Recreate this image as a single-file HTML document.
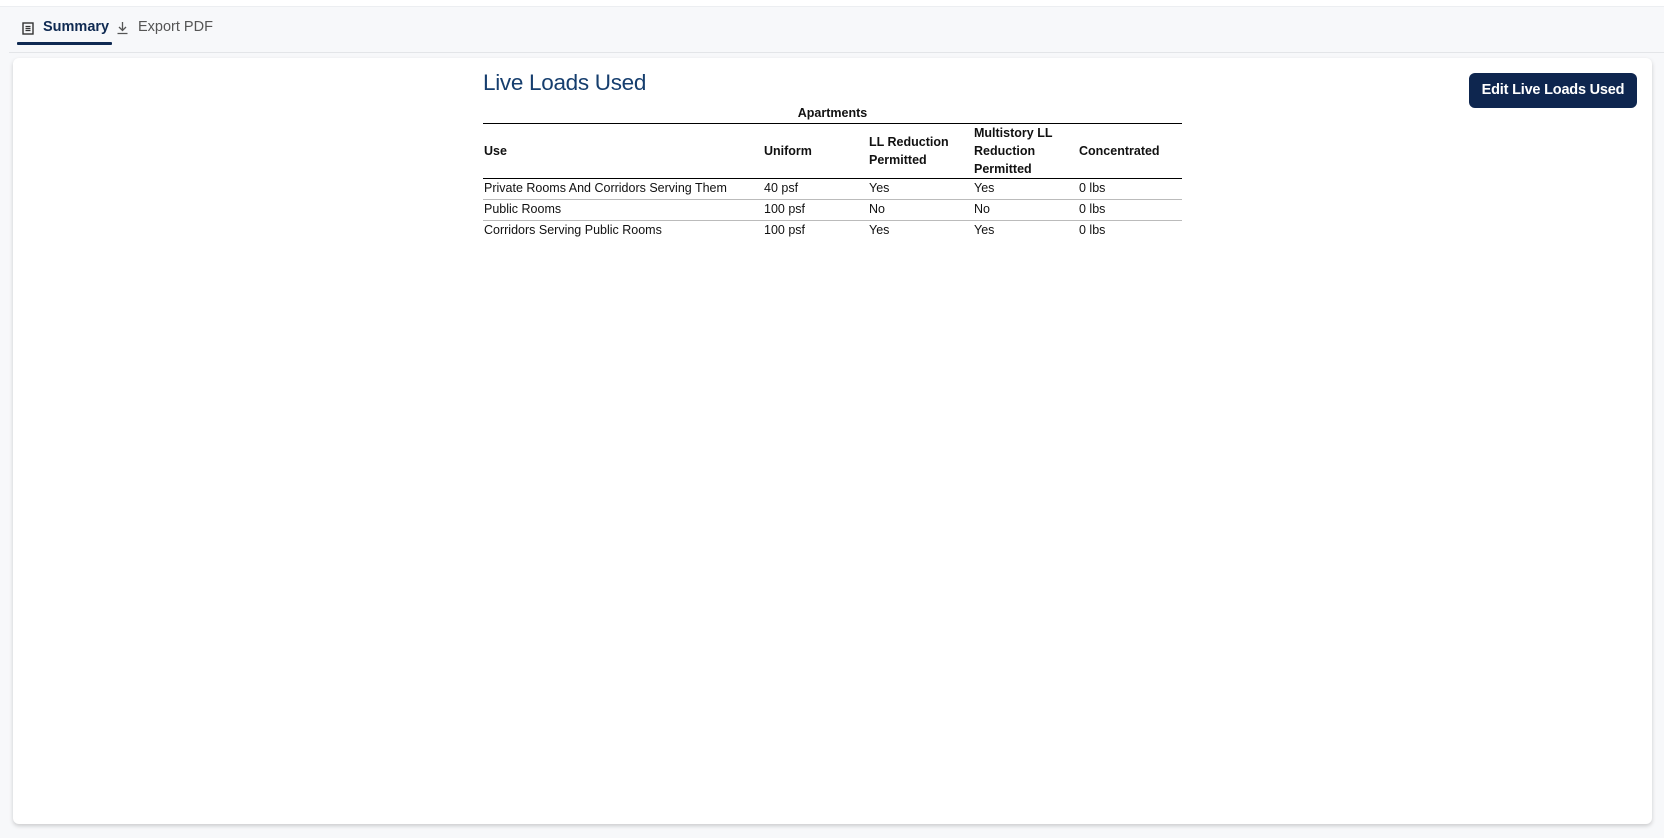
<!DOCTYPE html>
<html><head><style>
*{margin:0;padding:0;box-sizing:border-box}
body{width:1664px;height:838px;background:#f7f8fa;font-family:"Liberation Sans",sans-serif;position:relative;overflow:hidden}
.top{position:absolute;left:0;top:0;width:1664px;height:7px;background:#fff;border-bottom:1px solid #eceef1}
.hdr{position:absolute;left:9px;top:52px;width:1655px;height:1px;background:#e3e5e8}
.tab{position:absolute;top:19px;font-size:14.5px}
.ul{position:absolute;left:17px;top:42px;width:95px;height:3px;background:#0f2a52;border-radius:1px}
.card{position:absolute;left:13px;top:58px;width:1639px;height:766px;background:#fff;border-radius:6px;box-shadow:0 2px 4px rgba(0,0,0,.18)}
h1{position:absolute;left:483px;top:70px;font-size:22.5px;font-weight:normal;color:#163e6e;letter-spacing:-0.3px}
.btn{position:absolute;left:1469px;top:73px;width:168px;height:35px;background:#0e264f;color:#fff;border-radius:6px;font-size:14.5px;font-weight:bold;text-align:center;line-height:35px;letter-spacing:-0.2px}
table{position:absolute;left:483px;top:104px;width:699px;border-collapse:collapse;font-size:12.5px;color:#111}
th{font-weight:bold;text-align:left;vertical-align:middle;line-height:18px}
td{height:21px;vertical-align:middle;line-height:19px;padding-left:1px}
.cap th{text-align:center;height:19px;border-bottom:1px solid #000}
.h th{height:54px;border-bottom:1px solid #000;padding-left:1px}
.r td{border-bottom:1px solid #bbb}
</style></head><body>
<div class="top"></div>
<svg style="position:absolute;left:22px;top:22px" width="12" height="13" viewBox="0 0 12 13"><rect x="1" y="1" width="10" height="11" fill="none" stroke="#333" stroke-width="1.4"/><path d="M3.5 4.5h5M3.5 6.5h5M3.5 8.5h5" stroke="#333" stroke-width="1.2"/></svg>
<div class="tab" style="left:43px;color:#0f2a52;font-weight:bold">Summary</div>
<svg style="position:absolute;left:116px;top:21px" width="13" height="14" viewBox="0 0 13 14"><path d="M6.5 1v8M3 6l3.5 3.5L10 6M1.5 12.5h10" fill="none" stroke="#555" stroke-width="1.3"/></svg>
<div class="tab" style="left:138px;color:#555">Export PDF</div>
<div class="ul"></div>
<div class="hdr"></div>
<div class="card"></div>
<h1>Live Loads Used</h1>
<div class="btn">Edit Live Loads Used</div>
<table>
<colgroup><col style="width:280px"><col style="width:105px"><col style="width:105px"><col style="width:105px"><col></colgroup>
<tr class="cap"><th colspan="5">Apartments</th></tr>
<tr class="h"><th>Use</th><th>Uniform</th><th>LL Reduction<br>Permitted</th><th>Multistory LL<br>Reduction<br>Permitted</th><th>Concentrated</th></tr>
<tr class="r"><td>Private Rooms And Corridors Serving Them</td><td>40 psf</td><td>Yes</td><td>Yes</td><td>0 lbs</td></tr>
<tr class="r"><td>Public Rooms</td><td>100 psf</td><td>No</td><td>No</td><td>0 lbs</td></tr>
<tr><td>Corridors Serving Public Rooms</td><td>100 psf</td><td>Yes</td><td>Yes</td><td>0 lbs</td></tr>
</table>
</body></html>
